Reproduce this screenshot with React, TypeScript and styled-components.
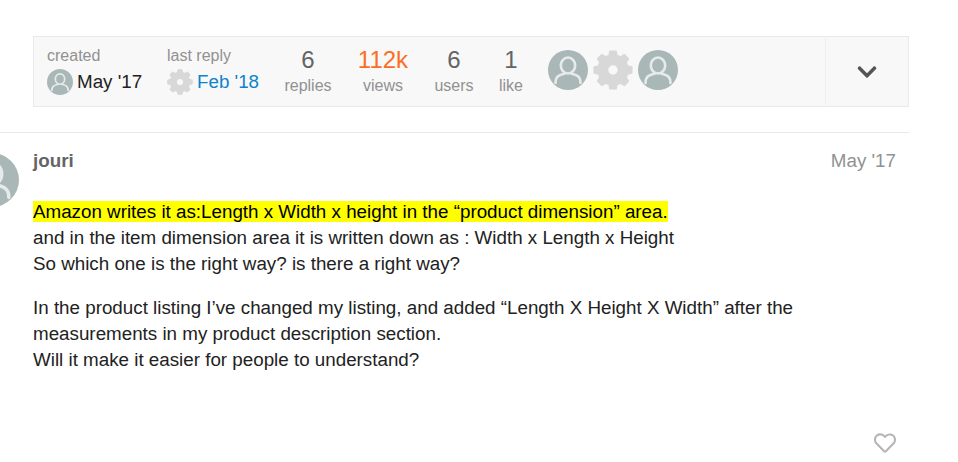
import React from 'react'
import styled, { createGlobalStyle } from 'styled-components'
import { FaChevronDown, FaRegHeart } from 'react-icons/fa'

const GlobalStyle = createGlobalStyle`
	html, body {
		margin: 0;
		padding: 0;
		background: #fff;
		overflow: hidden;
	}
	body {
		font-family: 'Liberation Sans', Arial, sans-serif;
		color: #222;
	}
`

// eight chunky teeth round a small hole, as on the system user's avatar
const gearPath = () => {
	const point = (radius: number, deg: number) => {
		const rad = (deg * Math.PI) / 180
		return `${(20 + radius * Math.cos(rad)).toFixed(2)} ${(20 + radius * Math.sin(rad)).toFixed(2)}`
	}
	const parts: string[] = []
	for (let i = 0; i < 8; i++) {
		const a = i * 45 - 90
		parts.push(
			`${i === 0 ? 'M' : 'L'}${point(15, a - 15)}`,
			`L${point(19, a - 9)}`,
			`L${point(19, a + 9)}`,
			`L${point(15, a + 15)}`,
		)
	}
	return `${parts.join(' ')} Z M25.5 20a5.5 5.5 0 1 0-11 0a5.5 5.5 0 1 0 11 0Z`
}

const Gear = ({ size }: { size: number }) => (
	<AvatarSvg viewBox="0 0 40 40" $size={size}>
		<path
			d={gearPath()}
			fill="#d8d8d8"
			fillRule="evenodd"
			stroke="#d8d8d8"
			strokeWidth="1.6"
			strokeLinejoin="round"
		/>
	</AvatarSvg>
)

const Avatar = ({ size }: { size: number }) => (
	<AvatarSvg viewBox="0 0 40 40" $size={size}>
		<circle cx="20" cy="20" r="20" fill="#a9b8b7" />
		<g fill="none" stroke="#e6ebea" strokeWidth="2.6" strokeLinecap="round">
			<ellipse cx="20" cy="15.5" rx="7.2" ry="8" />
			<path d="M7.5 33c0-6.5 3.5-8 9.5-9.6M32.5 33c0-6.5-3.5-8-9.5-9.6" />
		</g>
	</AvatarSvg>
)

const App = () => (
	<>
		<GlobalStyle />
		<Page>
			<TopicMap>
				<Dates>
					<DateBlock $width={120}>
						<Label>created</Label>
						<DateRow>
							<Avatar size={26} />
							<span>May '17</span>
						</DateRow>
					</DateBlock>
					<DateBlock $width={101}>
						<Label>last reply</Label>
						<DateRow>
							<Gear size={26} />
							<ReplyLink href="#">Feb '18</ReplyLink>
						</DateRow>
					</DateBlock>
				</Dates>
				<Stat $width={80}>
					<Number>6</Number>
					<StatLabel>replies</StatLabel>
				</Stat>
				<Stat $width={70}>
					<Number $hot>112k</Number>
					<StatLabel>views</StatLabel>
				</Stat>
				<Stat $width={72}>
					<Number>6</Number>
					<StatLabel>users</StatLabel>
				</Stat>
				<Stat $width={42}>
					<Number>1</Number>
					<StatLabel>like</StatLabel>
				</Stat>
				<Avatars>
					<Avatar size={40} />
					<Gear size={40} />
					<Avatar size={40} />
				</Avatars>
				<ExpandButton>
					<FaChevronDown />
				</ExpandButton>
			</TopicMap>
			<Divider />
			<Post>
				<PostAvatar>
					<Avatar size={54} />
				</PostAvatar>
				<PostBody>
					<PostHeader>
						<Username>jouri</Username>
						<PostDate>May '17</PostDate>
					</PostHeader>
					<Cooked>
						<p>
							<mark>Amazon writes it as:Length x Width x height in the “product dimension” area.</mark>
							<br />
							and in the item dimension area it is written down as : Width x Length x Height
							<br />
							So which one is the right way? is there a right way?
						</p>
						<p>
							In the product listing I’ve changed my listing, and added “Length X Height X Width” after the
							measurements in my product description section.
							<br />
							Will it make it easier for people to understand?
						</p>
					</Cooked>
					<PostActions>
						<FaRegHeart />
					</PostActions>
				</PostBody>
			</Post>
		</Page>
	</>
)

const Page = styled.div`
	width: 909px;
	padding-top: 36px;
`

const AvatarSvg = styled.svg<{ $size: number }>`
	width: ${(props) => props.$size}px;
	height: ${(props) => props.$size}px;
	flex-shrink: 0;
	display: block;
`

const TopicMap = styled.div`
	margin-left: 33px;
	height: 71px;
	box-sizing: border-box;
	background: #f8f8f8;
	border: 1px solid #e9e9e9;
	display: flex;
	align-items: flex-start;
	padding-left: 13px;
`

const Dates = styled.div`
	display: flex;
`

const DateBlock = styled.div<{ $width: number }>`
	width: ${(props) => props.$width}px;
	padding-top: 9px;
`

const Label = styled.div`
	font-size: 16px;
	line-height: 20px;
	color: #919191;
`

const DateRow = styled.div`
	display: flex;
	align-items: center;
	gap: 4px;
	margin-top: 3px;
	font-size: 18.79px;
	line-height: 26px;
	color: #222;
	white-space: nowrap;
`

const ReplyLink = styled.a`
	color: #0e83cd;
	text-decoration: none;
`

const Stat = styled.div<{ $width: number }>`
	width: ${(props) => props.$width}px;
	text-align: center;
	padding-top: 8px;
`

const Number = styled.div<{ $hot?: boolean }>`
	font-size: 24px;
	line-height: 30px;
	color: ${(props) => (props.$hot ? '#fb6e21' : '#646464')};
`

const StatLabel = styled.div`
	font-size: 16px;
	line-height: 20px;
	margin-top: 1px;
	color: #919191;
`

const Avatars = styled.div`
	display: flex;
	align-items: center;
	gap: 5px;
	margin-left: 16px;
	padding-top: 13px;
`

const ExpandButton = styled.div`
	margin-left: auto;
	align-self: stretch;
	width: 82px;
	margin-top: 1px;
	margin-bottom: 1px;
	border-left: 1px solid #eeeeee;
	display: flex;
	align-items: center;
	justify-content: center;
	color: #555;
	font-size: 22px;
`

const Divider = styled.div`
	height: 1px;
	margin-top: 25px;
	background: #e9e9e9;
`

const Post = styled.div`
	display: flex;
	padding-top: 18px;
`

const PostAvatar = styled.div`
	width: 33px;
	flex-shrink: 0;
	margin-left: -35px;
	margin-right: 35px;
	padding-top: 2px;
	display: flex;
	justify-content: flex-start;
`

const PostBody = styled.div`
	flex: 1;
	min-width: 0;
	padding-right: 13px;
`

const PostHeader = styled.div`
	display: flex;
	justify-content: space-between;
	align-items: baseline;
`

const Username = styled.div`
	font-size: 18.79px;
	line-height: 20px;
	font-weight: 700;
	color: #646464;
`

const PostDate = styled.div`
	font-size: 18.79px;
	line-height: 20px;
	color: #919191;
`

const Cooked = styled.div`
	margin-top: 28px;
	font-size: 18.79px;
	line-height: 26.13px;
	color: #222;

	p {
		margin: 0 0 17.5px;
	}

	mark {
		background: #ffff00;
		color: #000;
	}
`

const PostActions = styled.div`
	display: flex;
	justify-content: flex-end;
	padding-top: 41px;
	color: #b5b5b5;
	font-size: 22px;
`

export default App
